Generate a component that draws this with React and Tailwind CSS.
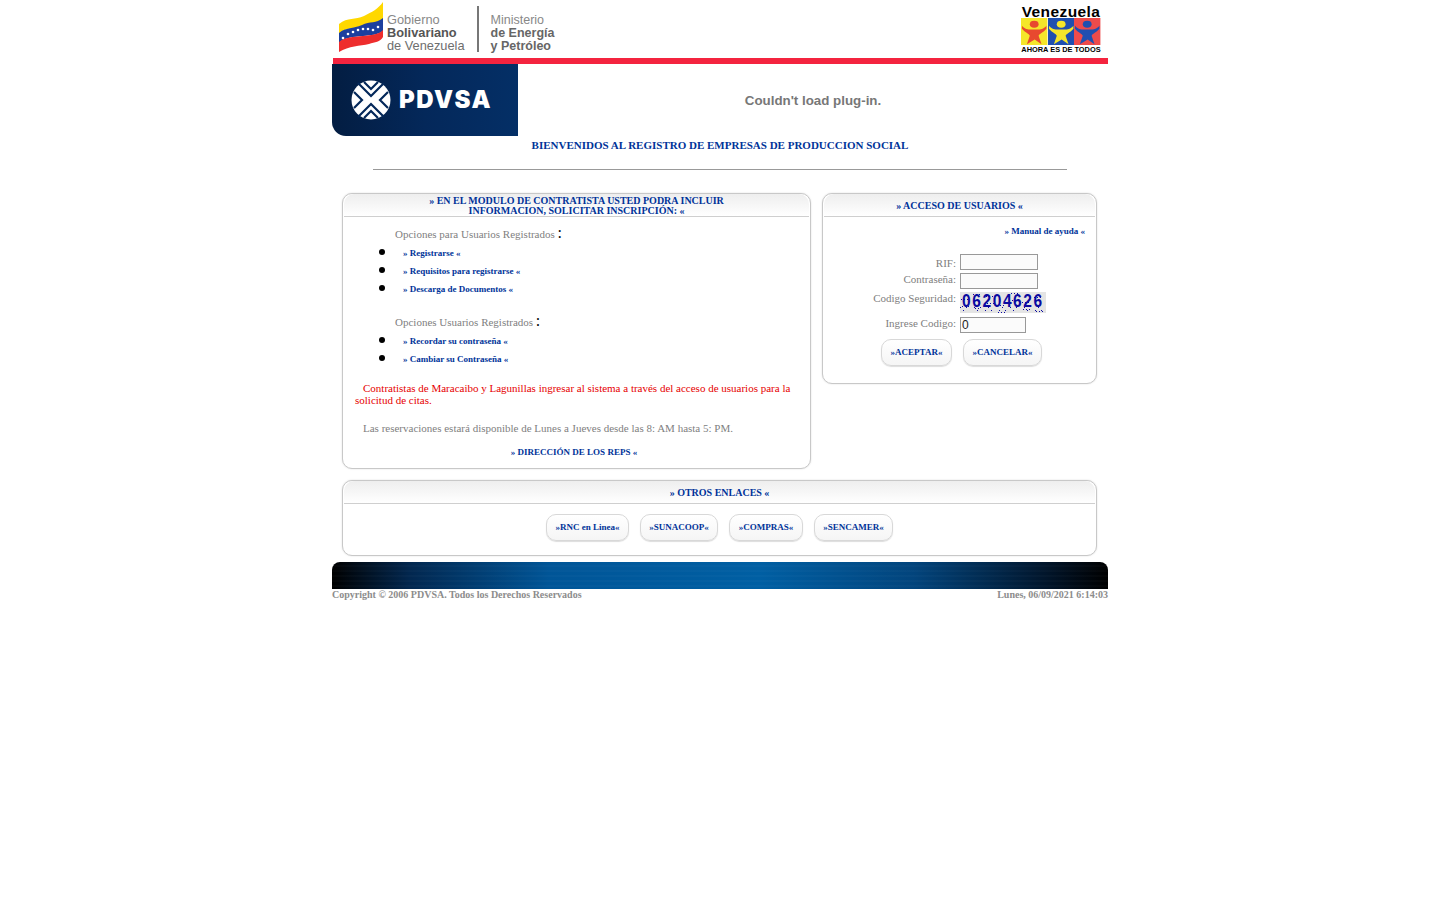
import React from 'react';

const serif = "font-['Liberation_Serif',serif]";
const sans = "font-['Liberation_Sans',sans-serif]";

// bandera con ondas, estrellas como puntos
const Flag = () => (
    <svg width="46" height="52" viewBox="0 0 46 52" className="shrink-0">
        <path d="M1 24 C10 17 17 20 26 16 C34 12 40 9 45 2 L45 19 C38 24 32 22 24 26 C15 29 8 27 1 34 Z" fill="#ffd800" />
        <path d="M1 33 C8 27 15 29 24 25 C32 21 38 24 45 18 L45 31 C40 35 33 35 25 36 C15 37 7 37 1 43 Z" fill="#1c3f9e" />
        <path d="M1 42 C7 37 15 37 25 36 C33 35 40 35 45 30 L45 37 C42 42 37 42 31 44 C22 46 11 46 1 52 Z" fill="#ee2d2d" />
        {[[5, 38], [10, 34], [15, 32], [20, 30], [25, 29], [30, 29], [35, 30], [40, 27]].map(([x, y]) => (
            <circle key={x} cx={x} cy={y} r="1.3" fill="#fff" />
        ))}
    </svg>
);

const PdvsaMark = () => (
    <svg width="40" height="40" viewBox="0 0 40 40" className="shrink-0">
        <circle cx="20" cy="20" r="19.5" fill="#fff" />
        <g stroke="#04285a" strokeWidth="2.2" fill="none">
            <path d="M7 3 L20 16 L33 3" />
            <path d="M13 2 L20 9 L27 2" />
            <path d="M7 37 L20 24 L33 37" />
            <path d="M13 38 L20 31 L27 38" />
            <path d="M3 12 L11 20 L3 28" />
            <path d="M37 12 L29 20 L37 28" />
        </g>
    </svg>
);

const Figure = ({ body, arm }) => (
    <svg width="26.4" height="27" viewBox="0 0 27 35" preserveAspectRatio="none" className="block">
        <rect width="27" height="35" fill={body} />
        <circle cx="13.5" cy="8" r="4.5" fill={arm} />
        <path d="M1 10 C5 16 9 15 13.5 15 C18 15 22 16 26 10 L26 14 C22 20 19 20 18 23 L21 34 L14 28 L6 34 L9 23 C8 20 5 20 1 14 Z" fill={arm} />
    </svg>
);

const Logos = () => (
    <div className="flex h-[58px] items-start justify-between pl-[6px] pr-[7px]">
        <div className="flex items-start">
            <Flag />
            <div className={`${sans} ml-[3px] mt-[13px] text-[12.8px] leading-[13px] text-[#6e6e6e]`}>
                <div className="text-[#888]">Gobierno</div>
                <div className="font-bold text-[#555]">Bolivariano</div>
                <div>de Venezuela</div>
            </div>
            <div className="ml-[12px] mt-[6px] h-[46px] w-[2px] bg-[#777]" />
            <div className={`${sans} ml-[12px] mt-[14px] text-[12.5px] leading-[13px] text-[#666]`}>
                <div className="text-[#888]">Ministerio</div>
                <div className="font-bold">de Energía</div>
                <div className="font-bold">y Petróleo</div>
            </div>
        </div>
        <div className="mt-[5px] flex w-[80px] flex-col items-center">
            <div className={`${sans} text-[15.5px] font-bold leading-[13px] tracking-[0.4px] text-black`}>Venezuela</div>
            <div className="flex">
                <Figure body="#f5e62a" arm="#e8492f" />
                <Figure body="#1f4fb0" arm="#f5e62a" />
                <Figure body="#ee4b4b" arm="#1f4fb0" />
            </div>
            <div className={`${sans} mt-[1px] whitespace-nowrap text-[7.4px] font-bold leading-[8px] text-black`}>AHORA ES DE TODOS</div>
        </div>
    </div>
);

const link = "font-bold text-[#003399]";

const Bullet = ({ children }) => (
    <li className="flex h-[18px] items-center">
        <span className="mb-[5px] ml-[35px] h-[6px] w-[6px] rounded-full bg-black" />
        <a className={`${link} ml-[18px] text-[9px]`}>{children}</a>
    </li>
);

const Panel = ({ title, className, children }) => (
    <section className={`rounded-[10px] border border-[#c8c8c8] bg-white px-[1px] shadow-[0_0_2px_#ddd] ${className}`}>
        <h2 className={`${link} flex h-[23px] items-center justify-center rounded-t-[10px] border-b border-[#cfcfcf] bg-gradient-to-b from-[#eeeeee] to-white pt-[2px] text-center text-[10px] leading-[10.5px]`}>
            <span>{title}</span>
        </h2>
        {children}
    </section>
);

const PillButton = ({ children, className }) => (
    <a className={`${link} flex h-[27px] items-center justify-center rounded-[10px] border border-[#d8d8d8] bg-gradient-to-b from-white to-[#f5f5f5] pt-[1px] text-[9px] shadow-[0_1px_1px_#ddd] ${className}`}>
        {children}
    </a>
);

const Field = ({ label, className, labelClass = "", children }) => (
    <div className={`flex ${className}`}>
        <span className={`w-[136px] pr-[4px] text-right leading-[12px] ${labelClass}`}>{label}</span>
        {children}
    </div>
);

const inputCls = "box-border block h-[16px] border border-[#999] bg-[#fbfbfb] px-[1px] text-[12px] leading-none text-[#222]";

// codigo de seguridad con ruido de puntos
const Captcha = () => (
    <div className="relative h-[21px] w-[86px] bg-[#e4e4e4]">
        <svg width="86" height="21" className="absolute inset-0">
            {Array.from({ length: 60 }).map((_, i) => (
                <rect key={i} x={(i * 37) % 86} y={i % 3 === 0 ? 15 + (i * 7) % 6 : (i * 13) % 21} width="1" height="1" fill="#0a0aa0" />
            ))}
        </svg>
        <span className={`${sans} absolute left-[2px] top-[-1px] origin-top scale-y-[1.15] text-[15.5px] font-bold leading-[18px] tracking-[1.6px] text-[#0a0aa0]`}>06204626</span>
    </div>
);

const Colon = () => <span className="text-[16px] leading-none text-black"> :</span>;

const App = () => (
    <div className={`${serif} mx-auto w-[776px] bg-white text-[11px] text-[#808080]`}>
        <Logos />
        <div className="ml-[1px] h-[6px] bg-[#f4243f]" />

        <div className="flex h-[72px]">
            <div className="flex w-[186px] items-center rounded-bl-[14px] bg-gradient-to-r from-[#031d42] via-[#04285a] to-[#042f66] pl-[19px]">
                <PdvsaMark />
                <span className="ml-[8px] font-['Inter',sans-serif] text-[24px] font-black tracking-[1.5px] text-white">PDVSA</span>
            </div>
            <div className={`${sans} flex flex-1 items-center justify-center pt-[1px] text-[13.33px] font-bold text-[#777]`}>
                Couldn't load plug-in.
            </div>
        </div>

        <h1 className={`${link} mt-[3px] text-center text-[11px] leading-[13px]`}>BIENVENIDOS AL REGISTRO DE EMPRESAS DE PRODUCCION SOCIAL</h1>
        <hr className="mx-[41px] mt-[17px] border-t border-b-0 border-[#999]" />

        <div className="mt-[23px] flex items-start pl-[10px]">
            <Panel className="h-[276px] w-[469px]" title={<>» EN EL MODULO DE CONTRATISTA USTED PODRA INCLUIR<br />INFORMACION, SOLICITAR INSCRIPCIÓN: «</>}>
                <p className="ml-[51px] mt-[8px] h-[17px] leading-[17px]">Opciones para Usuarios Registrados <Colon /></p>
                <ul className="mt-[3px]">
                    <Bullet>» Registrarse «</Bullet>
                    <Bullet>» Requisitos para registrarse «</Bullet>
                    <Bullet>» Descarga de Documentos «</Bullet>
                </ul>
                <p className="ml-[51px] mt-[14px] h-[17px] leading-[17px]">Opciones Usuarios Registrados <Colon /></p>
                <ul className="mt-[3px]">
                    <Bullet>» Recordar su contraseña «</Bullet>
                    <Bullet>» Cambiar su Contraseña «</Bullet>
                </ul>
                <p className="mx-[11px] mt-[13px] indent-[8px] leading-[12px] text-[#e60000]">
                    Contratistas de Maracaibo y Lagunillas ingresar al sistema a través del acceso de usuarios para la solicitud de citas.
                </p>
                <p className="mx-[11px] mt-[16px] indent-[8px] leading-[12px]">
                    Las reservaciones estará disponible de Lunes a Jueves desde las 8: AM hasta 5: PM.
                </p>
                <p className={`${link} mt-[12px] pr-[5px] text-center text-[9px] leading-[12px]`}>» DIRECCIÓN DE LOS REPS «</p>
            </Panel>

            <Panel className="ml-[11px] h-[191px] w-[275px]" title="» ACCESO DE USUARIOS «">
                <p className={`${link} mr-[10px] mt-[8px] text-right text-[9px] leading-[12px]`}>» Manual de ayuda «</p>
                <div className="mt-[14px]">
                    <Field label="RIF:" className="h-[19px] items-end" labelClass="mb-[1px]">
                        <input className={`${inputCls} w-[78px]`} readOnly />
                    </Field>
                    <Field label="Contraseña:" className="h-[19px] items-end" labelClass="mb-[4px]">
                        <input className={`${inputCls} w-[78px]`} readOnly />
                    </Field>
                    <Field label="Codigo Seguridad:" className="mt-[3px] h-[21px] items-start">
                        <Captcha />
                    </Field>
                    <Field label="Ingrese Codigo:" className="mt-[4px] h-[16px] items-start">
                        <input className={`${inputCls} w-[66px] ${sans}`} value="0" readOnly />
                    </Field>
                </div>
                <div className="ml-[57px] mt-[6px] flex gap-[11px]">
                    <PillButton className="w-[71px]">»ACEPTAR«</PillButton>
                    <PillButton className="w-[79px]">»CANCELAR«</PillButton>
                </div>
            </Panel>
        </div>

        <div className="mt-[11px] pl-[10px]">
            <Panel className="h-[76px] w-[755px]" title="» OTROS ENLACES «">
                <div className="mt-[10px] flex justify-center gap-[11px]">
                    <PillButton className="w-[83px]">»RNC en Linea«</PillButton>
                    <PillButton className="w-[78px]">»SUNACOOP«</PillButton>
                    <PillButton className="w-[74px]">»COMPRAS«</PillButton>
                    <PillButton className="w-[79px]">»SENCAMER«</PillButton>
                </div>
            </Panel>
        </div>

        <div className="mt-[6px] h-[27px] rounded-t-[8px] bg-[repeating-linear-gradient(to_bottom,transparent_0px,transparent_3px,rgba(255,255,255,0.02)_3px,rgba(255,255,255,0.02)_5px),linear-gradient(to_right,#000_0%,#02274f_10%,#005597_28%,#005fa3_55%,#02447c_75%,#01152b_92%,#000_100%)]" />
        <div className="flex justify-between text-[10px] font-bold leading-[11px] text-[#8c8c8c]">
            <span>Copyright © 2006 PDVSA. Todos los Derechos Reservados</span>
            <span>Lunes, 06/09/2021 6:14:03</span>
        </div>
    </div>
);

export default App;
